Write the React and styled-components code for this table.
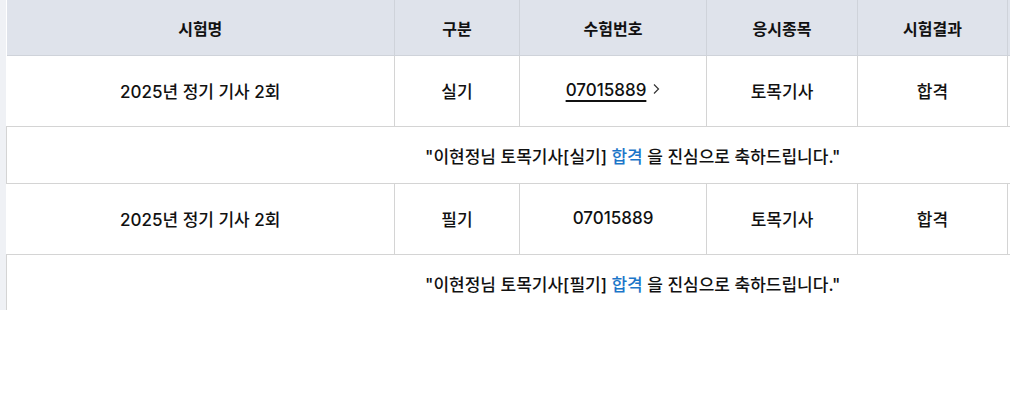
import React from "react";
import styled, { createGlobalStyle } from "styled-components";

const GlobalStyle = createGlobalStyle`
    html, body {
        margin: 0;
        padding: 0;
        background: #fff;
    }
    body {
        font-family: "Inter", "Noto Sans CJK KR", sans-serif;
        color: #111;
    }
`;

const columns = [
    { title: "시험명", width: 388 },
    { title: "구분", width: 125 },
    { title: "수험번호", width: 187 },
    { title: "응시종목", width: 151 },
    { title: "시험결과", width: 150 },
    { title: "", width: 251 },
];

const results = [
    { name: "2025년 정기 기사 2회", type: "실기", number: "07015889", link: true, subject: "토목기사", result: "합격" },
    { name: "2025년 정기 기사 2회", type: "필기", number: "07015889", link: false, subject: "토목기사", result: "합격" },
];

function App() {
    return (
        <>
            <GlobalStyle />
            <Wrapper>
                <Table>
                    <colgroup>
                        {columns.map((c, i) => (
                            <col key={i} style={{ width: c.width }} />
                        ))}
                    </colgroup>
                    <thead>
                        <tr>
                            {columns.map((c, i) => (
                                <Th key={i}>{c.title}</Th>
                            ))}
                        </tr>
                    </thead>
                    <tbody>
                        {results.map((r, i) => (
                            <React.Fragment key={i}>
                                <DataRow>
                                    <Td $first>{r.name}</Td>
                                    <Td>{r.type}</Td>
                                    <Td>
                                        {r.link ? (
                                            <NumberLink>
                                                <Underlined>{r.number}</Underlined>
                                                <Chevron width="7" height="12" viewBox="0 0 7 12">
                                                    <path d="M1 1.5 L5.5 6 L1 10.5" fill="none" stroke="#333" strokeWidth="1.2" />
                                                </Chevron>
                                            </NumberLink>
                                        ) : (
                                            r.number
                                        )}
                                    </Td>
                                    <Td>{r.subject}</Td>
                                    <Td>{r.result}</Td>
                                    <Td />
                                </DataRow>
                                <MessageRow>
                                    <MessageCell colSpan={6}>
                                        "이현정님 {r.subject}[{r.type}] <Pass>{r.result}</Pass> 을 진심으로 축하드립니다."
                                    </MessageCell>
                                </MessageRow>
                            </React.Fragment>
                        ))}
                    </tbody>
                </Table>
            </Wrapper>
        </>
    );
}

const Wrapper = styled.div`
    height: 310px;
    overflow: hidden;
    background: #eff1f5;
    padding-left: 6px;
`;
const Table = styled.table`
    width: 1252px;
    table-layout: fixed;
    border-collapse: collapse;
    background: #fff;
`;
const Th = styled.th`
    height: 55px;
    padding: 0;
    background: #dfe3eb;
    border-left: 1px solid #cfd3da;
    border-bottom: 1px solid #cfd3da;
    font-size: 16px;
    font-weight: 700;
    color: #111;
    text-align: center;
    &:first-child {
        border-left: none;
    }
`;
const DataRow = styled.tr`
    height: 71px;
`;
const Td = styled.td`
    padding: 0 0 2px;
    text-align: center;
    font-size: 17px;
    font-weight: 500;
    color: #111;
    border-bottom: 1px solid #d4d4d4;
    border-left: ${(p) => (p.$first ? "none" : "1px solid #d4d4d4")};
`;
const NumberLink = styled.a`
    display: inline-flex;
    align-items: center;
    gap: 7px;
    color: #111;
    text-decoration: none;
    cursor: pointer;
`;
const Underlined = styled.span`
    text-decoration: underline;
    text-decoration-thickness: 1.5px;
    text-underline-offset: 4px;
`;
const Chevron = styled.svg`
    display: block;
    margin-top: -2px;
`;
const MessageRow = styled.tr`
    height: 57px;
`;
const MessageCell = styled.td`
    padding: 0;
    text-align: center;
    font-size: 17px;
    font-weight: 500;
    color: #111;
    border-left: 1px solid #d4d4d4;
    border-bottom: 1px solid #d4d4d4;
`;
const Pass = styled.span`
    color: #1b76c9;
`;

export default App;
